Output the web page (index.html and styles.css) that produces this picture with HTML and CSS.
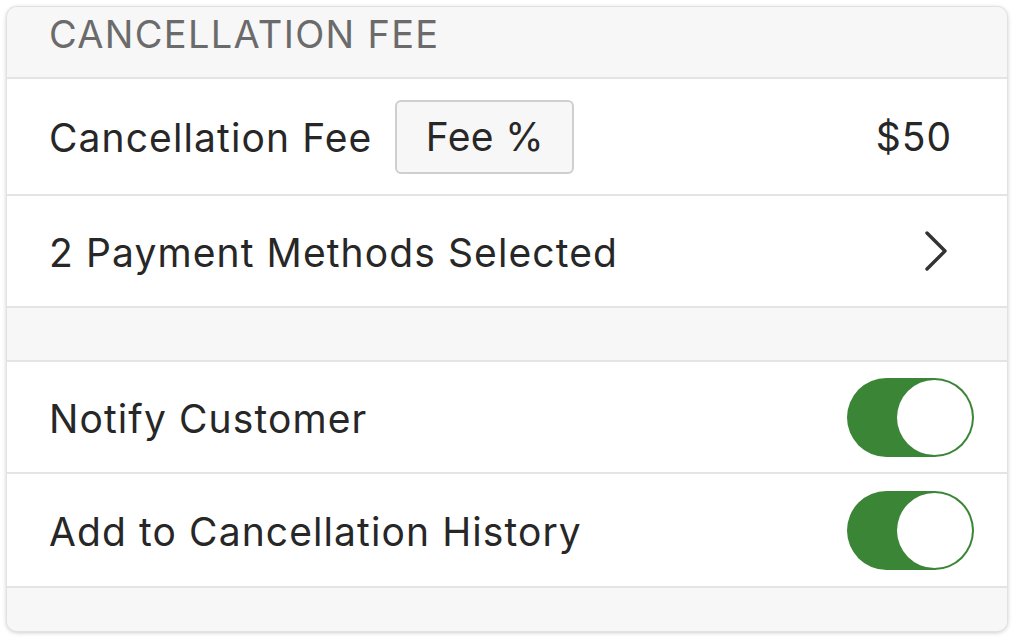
FILE: index.html
```html
<!DOCTYPE html>
<html>
<head>
<meta charset="utf-8">
<link rel="stylesheet" href="styles.css">
</head>
<body>
<div class="card">
  <div class="section-header"><span class="header-text">CANCELLATION FEE</span></div>
  <div class="row row-fee">
    <span class="label">Cancellation Fee</span>
    <span class="fee-btn">Fee %</span>
    <span class="value">$50</span>
  </div>
  <div class="row row-pay">
    <span class="label">2 Payment Methods Selected</span>
    <svg class="chevron" width="24" height="40" viewBox="0 0 24 40"><path d="M3 2 L21 20 L3 38" fill="none" stroke="#333" stroke-width="3.4" stroke-linecap="round" stroke-linejoin="round"/></svg>
  </div>
  <div class="spacer"></div>
  <div class="row row-notify">
    <span class="label">Notify Customer</span>
    <span class="toggle"><span class="knob"></span></span>
  </div>
  <div class="row row-history">
    <span class="label">Add to Cancellation History</span>
    <span class="toggle"><span class="knob"></span></span>
  </div>
  <div class="footer"></div>
</div>
</body>
</html>
```
FILE: styles.css
```css
html, body {
  margin: 0;
  padding: 0;
  background: #ffffff;
}
body {
  font-family: Inter, "Noto Sans", "Liberation Sans", sans-serif;
  color: #272727;
  width: 1015px;
  height: 639px;
  overflow: hidden;
}
.card {
  margin: 7px 8px 0 7px;
  width: 1000px;
  height: 624px;
  box-sizing: border-box;
  border-radius: 10px;
  overflow: hidden;
  background: #f7f7f7;
  box-shadow: 0 0 0 1px #e2e2e2, 0 1px 5px rgba(0,0,0,0.28);
  display: flex;
  flex-direction: column;
}
.section-header {
  height: 70px;
  flex: none;
  display: flex;
  align-items: flex-start;
  padding-left: 42px;
  border-bottom: 2px solid #e4e4e4;
  background: #f7f7f7;
}
.header-text {
  font-size: 38px;
  color: #6b6b6b;
  letter-spacing: 1.3px;
  line-height: 1;
  margin-top: 8px;
}
.row {
  flex: none;
  display: flex;
  align-items: center;
  background: #ffffff;
  border-bottom: 2px solid #e4e4e4;
  padding-left: 42px;
  padding-right: 55px;
}
.row-fee { height: 115px; }
.row-pay { height: 110px; padding-right: 59px; }
.row-notify { height: 110px; padding-right: 33px; }
.row-history { height: 112px; padding-right: 33px; }
.label {
  font-size: 39px;
  letter-spacing: 1.1px;
  padding-top: 2px;
}
.value {
  margin-left: auto;
  font-size: 39px;
  letter-spacing: 1px;
}
.fee-btn {
  margin-left: 23px;
  width: 179px;
  height: 74px;
  box-sizing: border-box;
  border: 2px solid #cfcfcf;
  border-radius: 6px;
  background: #f7f7f7;
  display: flex;
  align-items: center;
  justify-content: center;
  font-size: 39px;
  letter-spacing: 0.4px;
}
.chevron {
  margin-left: auto;
  display: block;
}
.spacer {
  flex: none;
  height: 52px;
  background: #f7f7f7;
  border-bottom: 2px solid #e4e4e4;
}
.toggle {
  margin-left: auto;
  width: 127px;
  height: 79px;
  box-sizing: border-box;
  border-radius: 40px;
  background: #3a8536;
  padding: 2px;
  display: flex;
  justify-content: flex-end;
}
.knob {
  width: 75px;
  height: 75px;
  border-radius: 50%;
  background: #ffffff;
}
.footer {
  flex: 1;
  background: #f7f7f7;
}
```
